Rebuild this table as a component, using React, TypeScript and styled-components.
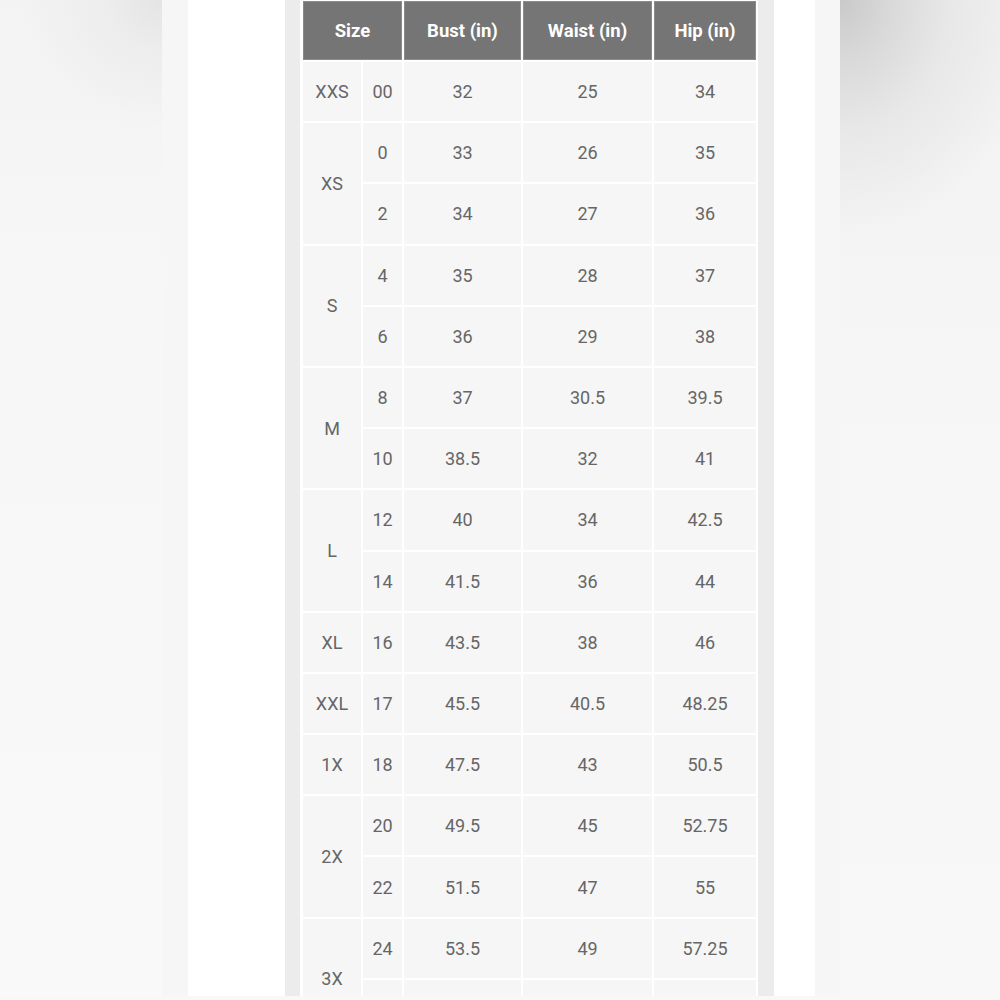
import React from "react";
import styled, { createGlobalStyle } from "styled-components";

const Global = createGlobalStyle`
  html, body { margin: 0; padding: 0; background: #f8f8f8; }
  body { font-family: Roboto, "Noto Sans", "Liberation Sans", sans-serif; }
`;

const Page = styled.div`
  width: 1000px;
  height: 1000px;
  overflow: hidden;
  display: grid;
  grid-template-columns: 162px 678px 160px;
  grid-template-rows: 996px 4px;
  background: #f9f9f9;
`;

const LeftBlur = styled.div`
  background:
    radial-gradient(ellipse 140px 130px at 162px 0px, #e4e4e4 0%, #ededed 40%, rgba(245,245,245,0) 100%),
    linear-gradient(180deg, #f3f3f3 0%, #f7f7f7 30%, #f9f9f9 100%);
`;

const RightBlur = styled.div`
  background:
    radial-gradient(ellipse 200px 240px at 0px 0px, #c9c9c9 0%, #d9d9d9 25%, #e8e8e8 55%, rgba(244,244,244,0) 100%),
    linear-gradient(180deg, #f2f2f2 0%, #f6f6f6 40%, #f8f8f8 100%);
`;

const BottomStrip = styled.div`
  grid-column: 1 / span 3;
  background: #f8f8f8;
`;

const Frame = styled.div`
  background: #f6f6f6;
  padding: 0 25px 0 26px;
  display: flex;
  overflow: hidden;
`;

const Paper = styled.div`
  flex: 1;
  background: #ffffff;
  padding-left: 97px;
  display: flex;
  overflow: hidden;
`;

const TableWrap = styled.div`
  width: 489px;
  background: #ececec;
  padding: 0 16px 0 15px;
  box-sizing: border-box;
  overflow: hidden;
`;

const Table = styled.div`
  background: #ffffff;
  padding: 1px 2px 0 3px;
  display: grid;
  grid-template-columns: 58px 39px 117px 129px 102px;
  grid-template-rows: 59px;
  grid-auto-rows: 59.2px;
  gap: 2px;
  min-height: 1100px;
  align-content: start;
`;

const HeadCell = styled.div<{ $span?: number }>`
  grid-column: span ${(p) => p.$span ?? 1};
  background: #757575;
  border: 1px solid #8c8c8c;
  box-sizing: border-box;
  color: #ffffff;
  font-weight: 700;
  font-size: 18.5px;
  display: flex;
  align-items: center;
  justify-content: center;
`;

const Cell = styled.div<{ $rows?: number }>`
  grid-row: span ${(p) => p.$rows ?? 1};
  background: #f6f6f6;
  color: #666666;
  font-size: 18px;
  display: flex;
  align-items: center;
  justify-content: center;
`;

type Row = [string, string, string, string];
type Group = { size: string; rows: Row[] };

const groups: Group[] = [
  { size: "XXS", rows: [["00", "32", "25", "34"]] },
  { size: "XS", rows: [["0", "33", "26", "35"], ["2", "34", "27", "36"]] },
  { size: "S", rows: [["4", "35", "28", "37"], ["6", "36", "29", "38"]] },
  { size: "M", rows: [["8", "37", "30.5", "39.5"], ["10", "38.5", "32", "41"]] },
  { size: "L", rows: [["12", "40", "34", "42.5"], ["14", "41.5", "36", "44"]] },
  { size: "XL", rows: [["16", "43.5", "38", "46"]] },
  { size: "XXL", rows: [["17", "45.5", "40.5", "48.25"]] },
  { size: "1X", rows: [["18", "47.5", "43", "50.5"]] },
  { size: "2X", rows: [["20", "49.5", "45", "52.75"], ["22", "51.5", "47", "55"]] },
  { size: "3X", rows: [["24", "53.5", "49", "57.25"], ["", "", "", ""]] },
];

export default function App() {
  return (
    <>
      <Global />
      <Page>
        <LeftBlur />
        <Frame>
          <Paper>
            <TableWrap>
              <Table>
                <HeadCell $span={2}>Size</HeadCell>
                <HeadCell>Bust (in)</HeadCell>
                <HeadCell>Waist (in)</HeadCell>
                <HeadCell>Hip (in)</HeadCell>
                {groups.map((g) =>
                  g.rows.map((r, i) => (
                    <React.Fragment key={g.size + i}>
                      {i === 0 && <Cell $rows={g.rows.length}>{g.size}</Cell>}
                      {r.map((v, j) => (
                        <Cell key={j}>{v}</Cell>
                      ))}
                    </React.Fragment>
                  ))
                )}
              </Table>
            </TableWrap>
          </Paper>
        </Frame>
        <RightBlur />
        <BottomStrip />
      </Page>
    </>
  );
}
